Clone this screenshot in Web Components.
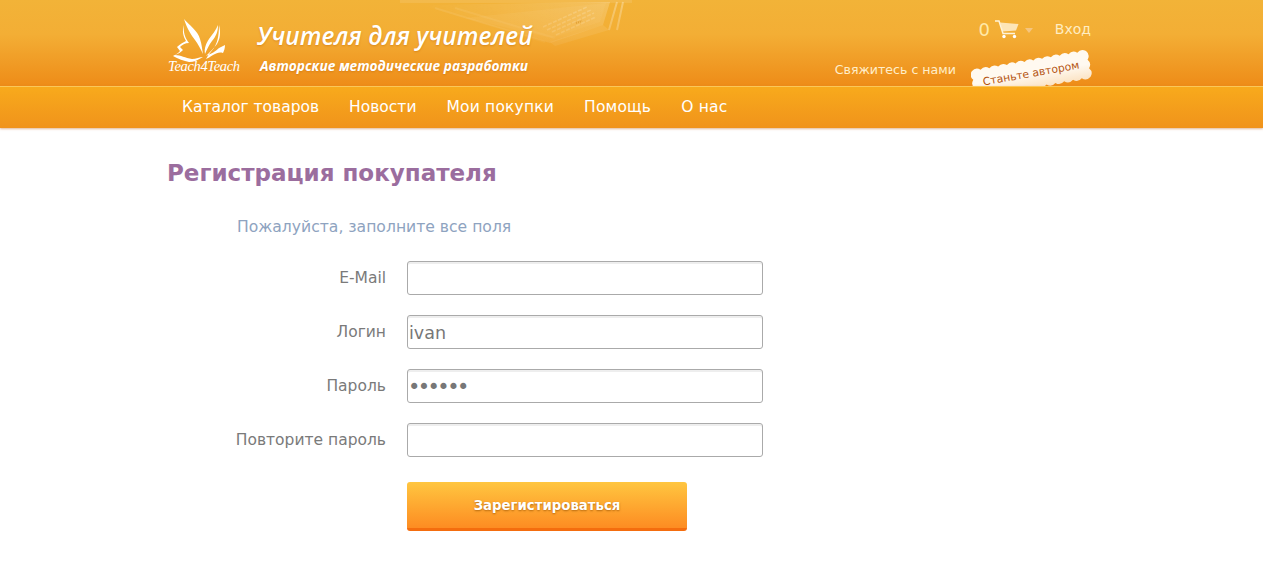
<!DOCTYPE html>
<html lang="ru"><head><meta charset="utf-8"><title>Регистрация покупателя</title>
<style>
html,body{margin:0;padding:0;background:#fff;font-family:"DejaVu Sans",sans-serif}
</style></head><body>
<t4t-header></t4t-header>
<t4t-nav></t4t-nav>
<t4t-page>
  <t4t-field label="E-Mail"></t4t-field>
  <t4t-field label="Логин" value="ivan"></t4t-field>
  <t4t-field label="Пароль" value="secret" type="password"></t4t-field>
  <t4t-field label="Повторите пароль" type="password"></t4t-field>
</t4t-page>
<script>
function scallop(){
  const x0=2,x1=118,y0=14,y1=40,a=1.9;const pts=[];
  const edge=(xa,ya,xb,yb,n,nx,ny)=>{for(let i=0;i<n;i++){const t0=i/n,t1=(i+1)/n;
    const mx=xa+(xb-xa)*(t0+t1)/2+nx*a*2,my=ya+(yb-ya)*(t0+t1)/2+ny*a*2;
    pts.push(`Q${mx.toFixed(1)} ${my.toFixed(1)} ${(xa+(xb-xa)*t1).toFixed(1)} ${(ya+(yb-ya)*t1).toFixed(1)}`);}};
  edge(x0,y0,x1,y0,13,0,-1);edge(x1,y0,x1,y1,3,1,0);edge(x1,y1,x0,y1,13,0,1);edge(x0,y1,x0,y0,3,-1,0);
  return `M${x0} ${y0}`+pts.join('')+'Z';
}
class T4tHeader extends HTMLElement{constructor(){super();this.attachShadow({mode:'open'}).innerHTML=`
<style>
:host{display:block;height:86px;background:linear-gradient(#f2b338 0,#f3ae35 40%,#ee8c18 100%);color:#fff}
.wrap{position:relative;width:930px;height:86px;margin:0 auto 0 167px;display:flex;justify-content:space-between}
.brand{display:flex;align-items:flex-start;position:relative;z-index:1}
.logo{width:76px;height:62px;margin-top:15px;flex:none}
.logo text{font-family:"Liberation Serif",serif;font-style:italic;font-size:14.5px;fill:#fff}
.titles{margin:16px 0 0 14px;font-family:"Open Sans",sans-serif;font-style:italic}
.t1{font-size:24.4px;font-weight:600;line-height:40px;color:#fff;text-shadow:0 1px 2px rgba(190,100,0,.45);white-space:nowrap}
.t2{font-size:13.7px;font-weight:700;line-height:18px;margin:1px 0 0 3px;color:#fff;text-shadow:0 1px 2px rgba(190,100,0,.45);white-space:nowrap}
.deco{position:absolute;left:228px;top:0;width:240px;height:60px;pointer-events:none}
.right{width:260px;display:flex;flex-direction:column;align-items:flex-end;margin-right:6px;position:relative}
.top{display:flex;align-items:center;margin-top:18px;height:22px;font-size:14px;color:#ffedc2}
.count{font-size:18px;color:#ffe9a8;margin-right:5px}
.caret{width:0;height:0;border:4px solid transparent;border-top:5px solid #f5c57f;border-bottom:0;margin:3px 22px 0 6px}
.bottom{position:absolute;right:0;top:47px;display:flex;align-items:flex-start}
.contact{font-size:12.6px;color:#ffeec9;margin-top:15px;margin-right:135px;white-space:nowrap}
.stamp{position:absolute;right:-10px;top:0;width:130px;height:50px}
.stamp text{font-family:"DejaVu Sans",sans-serif;font-size:10.8px;fill:#b4530f}
</style>
<div class="wrap">
  <svg class="deco" viewBox="0 0 240 60" aria-hidden="true">
    <defs><linearGradient id="f" x1="0" y1="0" x2="1" y2="0"><stop offset="0" stop-color="#fff" stop-opacity="0"/><stop offset=".55" stop-color="#fff" stop-opacity=".12"/><stop offset="1" stop-color="#fff" stop-opacity=".2"/></linearGradient>
    <linearGradient id="fade" x1="0" y1="0" x2="0" y2="1"><stop offset="0" stop-color="#fff"/><stop offset=".8" stop-color="#fff" stop-opacity=".5"/><stop offset="1" stop-color="#fff" stop-opacity="0"/></linearGradient>
    <linearGradient id="st" x1="0" y1="0" x2="0" y2="1"><stop offset=".5" stop-color="#fff9f0"/><stop offset="1" stop-color="#fbe3c4"/></linearGradient>
    <mask id="m"><rect width="240" height="60" fill="url(#fade)"/></mask></defs>
    <g mask="url(#m)">
      <rect x="5" y="0" width="232" height="3" fill="#fff" fill-opacity=".1"/>
      <path d="M25 5L215 2L208 25L155 43Z" fill="url(#f)"/>
      <path d="M70 18L211 3L205 22L157 38Z" fill="#fff" fill-opacity=".05"/>
      <path d="M40 8L150 42M60 8L160 38" stroke="#fff" stroke-opacity=".08" stroke-width="2" fill="none"/>
      <path d="M148 27L192 7M152 30L196 10M157 32L199 13M161 35L201 17" stroke="#fff" stroke-opacity=".2" stroke-width="1.6" stroke-dasharray="4 1.5" fill="none"/>
      <path d="M181 23L187 21" stroke="#c77b12" stroke-opacity=".55" stroke-width="2" stroke-dasharray="1 1" fill="none"/>
      <path d="M222 2L214 30M228 2L222 30" stroke="#fff" stroke-opacity=".3" stroke-width="2" fill="none"/>
      <path d="M155 42L208 25L214 30L160 46Z" fill="#fff" fill-opacity=".12"/>
    </g>
  </svg>
  <div class="brand">
    <svg class="logo" viewBox="0 0 76 62" aria-hidden="true">
      <g fill="#fff">
        <path d="M17 4C22 10 31 16 33 24C35 30 35 34 36 39C33 33 31 29 28 25C25 21 20 14 17 4Z"/>
        <path d="M17 10C16 17 18 23 22 28C18 28 15 30 13 32L16 35C14 37 11 39 8 40C14 40 18 43 25 44C29 44 33 42 36 42C31 45 27 47 22 47C17 46 11 44 6 41C9 39 12 38 13 36L10 32C13 29 17 27 19 26C16 21 15 16 17 10Z"/>
        <path d="M51 10C51 17 49 21 45 26C42 30 40 34 38 39C37 33 39 29 42 24C45 20 49 15 51 10Z"/>
        <path d="M52 10C54 18 53 24 50 29C47 33 43 37 39 41C44 39 49 36 52 33L58 30C58 33 57 36 56 38C52 37 50 38 46 40C43 42 41 43 39 44C41 40 44 37 47 33C50 28 52 22 52 10Z"/>
      </g>
      <text x="1" y="56" textLength="72" lengthAdjust="spacing">Teach4Teach</text>
    </svg>
    <div class="titles">
      <div class="t1">Учителя для учителей</div>
      <div class="t2">Авторские методические разработки</div>
    </div>
  </div>
  <div class="right">
    <div class="top">
      <span class="count">0</span>
      <svg width="24" height="20" viewBox="0 0 24 20" aria-hidden="true"><g fill="none" stroke="#fff3d8" stroke-width="1.5"><path d="M0 2H4L8 14.5H20"/></g><path d="M5 3.5L23.5 5L21 11.5L7.5 12.5Z" fill="#fff3d8" fill-opacity=".8"/><circle cx="9" cy="17.5" r="1.7" fill="#fff"/><circle cx="19.5" cy="17.5" r="1.7" fill="#fff"/></svg>
      <span class="caret"></span>
      <span>Вход</span>
    </div>
    <div class="bottom">
      <span class="contact">Свяжитесь с нами</span>
      <svg class="stamp" viewBox="0 0 130 50" role="img" aria-label="Станьте автором">
        <g transform="rotate(-10 60 26)"><path d="${scallop()}" fill="url(#st)"/>
        <text x="60" y="30" text-anchor="middle">Станьте автором</text></g>
      </svg>
    </div>
  </div>
</div>`}}
customElements.define('t4t-header',T4tHeader);

class T4tNav extends HTMLElement{constructor(){super();this.attachShadow({mode:'open'}).innerHTML=`
<style>
:host{display:block;height:42px;box-sizing:border-box;border-top:1px solid #fbc758;background:linear-gradient(#f8aa1c,#f0931b);box-shadow:0 1px 2px rgba(200,120,60,.55);position:relative;z-index:2}
nav{display:flex;gap:30px;padding-left:182px;font-size:15.5px;line-height:40px;color:#fff;white-space:nowrap}
.w{letter-spacing:.18px}
</style>
<nav><span>Каталог товаров</span><span>Новости</span><span class="w">Мои покупки</span><span class="w">Помощь</span><span class="w">О нас</span></nav>`}}
customElements.define('t4t-nav',T4tNav);

class T4tPage extends HTMLElement{constructor(){super();this.attachShadow({mode:'open'}).innerHTML=`
<style>
:host{display:block;padding:30px 0 0 167px}
h1{margin:0;font-size:23px;line-height:30px;font-weight:700;color:#9b6d9e}
p{margin:29px 0 0 70px;font-size:15.6px;line-height:20px;color:#8ea3c0}
.form{margin-top:24px;display:flex;flex-direction:column}
.submit{margin:25px 0 0 240px;width:280px;height:49px;box-sizing:border-box;border:0;border-bottom:3px solid #f46d0e;border-radius:3px;background:linear-gradient(#ffc640,#fd8c22);color:#fff;font:700 13.3px "DejaVu Sans",sans-serif;text-shadow:0 1px 2px rgba(150,80,0,.7);padding:1px 0 0;display:block}
</style>
<h1>Регистрация покупателя</h1>
<p>Пожалуйста, заполните все поля</p>
<div class="form"><slot></slot></div>
<button class="submit">Зарегистироваться</button>`}}
customElements.define('t4t-page',T4tPage);

class T4tField extends HTMLElement{constructor(){super();const s=this.attachShadow({mode:'open'});
s.innerHTML=`
<style>
:host{display:flex;align-items:center;height:34px;margin-bottom:20px}
:host(:last-child){margin-bottom:0}
label{width:219px;text-align:right;margin-right:21px;font-size:15.5px;color:#7a7a7a;white-space:nowrap}
input{width:356px;height:34px;box-sizing:border-box;border:1px solid #aaa;border-radius:3px;box-shadow:inset 0 2px 0 #eee;padding:2px 1px 0;margin:0;font:17.5px "DejaVu Sans",sans-serif;color:#777;background:#fff;outline:0}
:host([type=password]) input{font-size:21px;letter-spacing:-2.6px;padding-left:0}
</style><label></label><input>`;
const i=s.querySelector('input');s.querySelector('label').textContent=this.getAttribute('label');
i.type=this.getAttribute('type')||'text';i.value=this.getAttribute('value')||'';}}
customElements.define('t4t-field',T4tField);
</script>
</body></html>
